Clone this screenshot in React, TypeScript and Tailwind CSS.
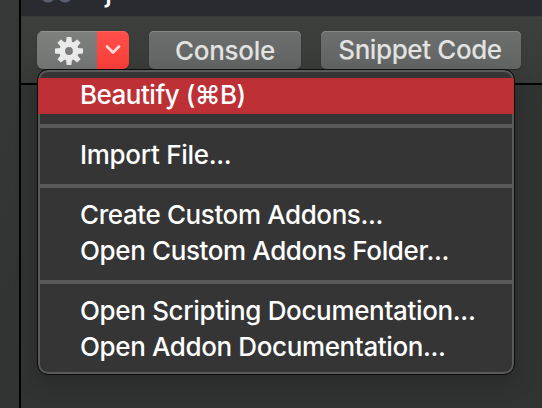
import type { ReactNode } from "react";

function MenuItem({ label, tracking, active = false }: { label: string; tracking: string; active?: boolean }) {
  return (
    <div className={`flex h-9 shrink-0 items-center whitespace-nowrap pb-0.5 pl-[42px] text-[26px] font-medium leading-[34px] text-white ${active ? "bg-[#bd3036]" : ""}`}>
      <span className={tracking}>{label}</span>
    </div>
  );
}

function Separator() {
  return (
    <div className="flex h-6 shrink-0 items-center">
      <div className="h-1 w-full bg-[#595a59]" />
    </div>
  );
}

function ToolButton({ className, children }: { className: string; children: ReactNode }) {
  return (
    <button className={`flex h-[38px] shrink-0 items-center justify-center whitespace-nowrap rounded-[5px] bg-linear-to-b from-[#6c6e6d] to-[#626563] text-[26px] font-medium leading-9 text-[#e2e3e2] shadow-[inset_0_1px_0_#858786,0_1px_1px_#252726] ${className}`}>
      {children}
    </button>
  );
}

function GearIcon() {
  const teeth = [0, 45, 90, 135, 180, 225, 270, 315];
  return (
    <svg width="28" height="28" viewBox="-14 -14 28 28" fill="#eaeaea">
      <circle r="6.8" fill="none" stroke="#eaeaea" strokeWidth="5.8" />
      {teeth.map((angle) => (
        <path key={angle} d="M-3-8.5L-2.4-14H2.4L3-8.5Z" transform={`rotate(${angle})`} />
      ))}
    </svg>
  );
}

export default function App() {
  return (
    <div className="relative flex h-[408px] w-[542px] overflow-hidden bg-[#303331] font-['Inter','Noto_Sans',sans-serif]">
      <div className="w-[19px] shrink-0 bg-linear-to-b from-[#363837] to-[#303331]" />
      <div className="w-0.5 shrink-0 bg-black" />
      <div className="flex min-w-0 flex-1 flex-col">
        <header className="flex h-4 shrink-0 overflow-hidden bg-[#2a2b31]">
          <svg className="ml-5 shrink-0" width="32" height="4" viewBox="0 0 32 4" fill="none" stroke="#59606d" strokeWidth="4">
            <circle cx="7" cy="-5" r="5.5" />
            <circle cx="24" cy="-5" r="5.5" />
          </svg>
          <span className="-mt-[26px] ml-[32px] text-[28px] font-medium leading-9 text-white">j</span>
        </header>
        <div className="flex h-[67px] shrink-0 gap-5 border-t border-[#383a38] bg-linear-to-b from-[#3d3f3d] to-[#383a38] pl-4 pt-[14px]">
          <div className="flex h-[38px] w-[92px] shrink-0 overflow-hidden rounded-[6px] shadow-[0_1px_1px_#252726]">
            <button className="flex w-[60px] items-center bg-linear-to-b from-[#7e807e] to-[#737674] pl-[18px] pt-0.5 shadow-[inset_0_1px_0_#929492]">
              <GearIcon />
            </button>
            <button className="flex w-8 items-center justify-center bg-linear-to-b from-[#ff4f49] to-[#fb3e39] shadow-[inset_0_1px_0_#ff655f]">
              <svg width="16" height="10" viewBox="0 0 16 10" fill="none" stroke="#ffd9d7" strokeWidth="2.7" strokeLinecap="round" strokeLinejoin="round">
                <path d="M2 1.5L8 7.5L14 1.5" />
              </svg>
            </button>
          </div>
          <ToolButton className="w-[152px]">
            <span className="pt-0.5 tracking-[-0.3px]">Console</span>
          </ToolButton>
          <ToolButton className="w-[200px]">
            <span className="-ml-0.5 tracking-[-0.4px]">Snippet Code</span>
          </ToolButton>
        </div>
        <div className="h-0.5 shrink-0 bg-black" />
        <div className="flex-1 bg-[#303331]" />
      </div>

      <div className="absolute left-[38px] top-[70px] h-[304px] w-[476px] overflow-hidden rounded-[10px] bg-[#353535] pt-2 shadow-[inset_0_0_0_2px_#595a59,0_8px_24px_rgba(0,0,0,0.2)] outline outline-[#0c0c0c]">
        <MenuItem label="Beautify (⌘B)" tracking="tracking-[-0.5px]" active />
        <Separator />
        <MenuItem label="Import File..." tracking="tracking-[-0.3px]" />
        <Separator />
        <MenuItem label="Create Custom Addons..." tracking="tracking-[-0.4px]" />
        <MenuItem label="Open Custom Addons Folder..." tracking="tracking-[-0.38px]" />
        <Separator />
        <MenuItem label="Open Scripting Documentation..." tracking="tracking-[-0.34px]" />
        <MenuItem label="Open Addon Documentation..." tracking="tracking-[-0.38px]" />
      </div>
    </div>
  );
}
